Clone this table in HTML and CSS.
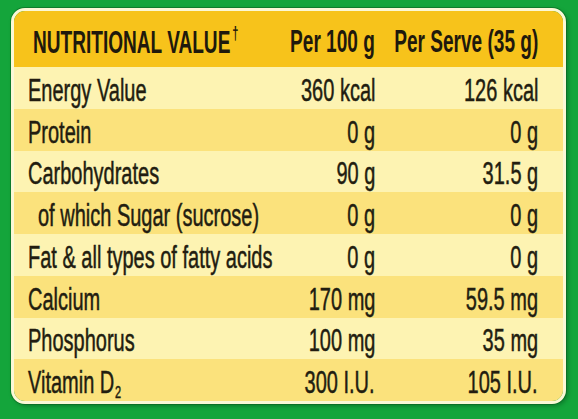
FILE: index.html
```html
<!DOCTYPE html>
<html>
<head>
    <title>Nutritional Value</title>
    <link rel="stylesheet" href="styles.css">
</head>
<body>
    <div class="label">
        <div class="row head">
            <div class="cell name"><span class="txt">NUTRITIONAL VALUE<sup class="dagger">†</sup></span></div>
            <div class="cell num"><span class="txt">Per 100 g</span></div>
            <div class="cell num last"><span class="txt">Per Serve (35 g)</span></div>
        </div>
        <div class="row light">
            <div class="cell name"><span class="txt">Energy Value</span></div>
            <div class="cell num"><span class="txt">360 kcal</span></div>
            <div class="cell num last"><span class="txt">126 kcal</span></div>
        </div>
        <div class="row dark">
            <div class="cell name"><span class="txt">Protein</span></div>
            <div class="cell num"><span class="txt">0 g</span></div>
            <div class="cell num last"><span class="txt">0 g</span></div>
        </div>
        <div class="row light">
            <div class="cell name"><span class="txt">Carbohydrates</span></div>
            <div class="cell num"><span class="txt">90 g</span></div>
            <div class="cell num last"><span class="txt">31.5 g</span></div>
        </div>
        <div class="row dark">
            <div class="cell name sub"><span class="txt">of which Sugar (sucrose)</span></div>
            <div class="cell num"><span class="txt">0 g</span></div>
            <div class="cell num last"><span class="txt">0 g</span></div>
        </div>
        <div class="row light">
            <div class="cell name"><span class="txt">Fat &amp; all types of fatty acids</span></div>
            <div class="cell num"><span class="txt">0 g</span></div>
            <div class="cell num last"><span class="txt">0 g</span></div>
        </div>
        <div class="row dark">
            <div class="cell name"><span class="txt">Calcium</span></div>
            <div class="cell num"><span class="txt">170 mg</span></div>
            <div class="cell num last"><span class="txt">59.5 mg</span></div>
        </div>
        <div class="row light">
            <div class="cell name"><span class="txt">Phosphorus</span></div>
            <div class="cell num"><span class="txt">100 mg</span></div>
            <div class="cell num last"><span class="txt">35 mg</span></div>
        </div>
        <div class="row dark">
            <div class="cell name"><span class="txt">Vitamin D<sub class="low">2</sub></span></div>
            <div class="cell num"><span class="txt">300 I.U.</span></div>
            <div class="cell num last"><span class="txt">105 I.U.</span></div>
        </div>
    </div>
</body>
</html>
```

FILE: styles.css
```css
* {
    margin: 0;
    padding: 0;
    box-sizing: border-box;
}

body {
    width: 578px;
    height: 419px;
    background: #14a53b;
    padding: 8px 12px 15px 11px;
    font-family: 'Liberation Sans', Arial, sans-serif;
    color: #221d10;
    overflow: hidden;
}

.label {
    width: 555px;
    height: 396px;
    border: 3px solid #fbf8d6;
    border-radius: 14px;
    overflow: hidden;
    display: grid;
    grid-template-rows: 56px repeat(8, minmax(0, 1fr));
    box-shadow: 0 0 0 1px rgba(10, 90, 30, 0.5), 2px 2px 4px rgba(0, 60, 20, 0.4);
}

.row {
    display: grid;
    grid-template-columns: minmax(0, 1fr) 110px 188px;
    align-items: center;
    white-space: nowrap;
    line-height: 1.1;
    padding-top: 6px;
}

.head {
    background: #f7c31b;
    font-weight: bold;
    font-size: 31px;
    color: #1f190c;
    padding-top: 7px;
}

.light {
    background: #fdf3b2;
    font-size: 31px;
}

.dark {
    background: #fbe27c;
    font-size: 31px;
}

.light .txt,
.dark .txt {
    -webkit-text-stroke: 0.5px #221d10;
}

.cell {
    min-width: 0;
}

.cell.name {
    padding-left: 14px;
}

.head .cell.name {
    padding-left: 19px;
}

.cell.name.sub {
    padding-left: 24px;
}

.cell.num {
    display: flex;
    justify-content: flex-end;
}

.cell.num.last {
    padding-right: 25px;
}

.txt {
    display: inline-block;
    transform: scaleX(0.645);
    transform-origin: left center;
}

.head .txt {
    transform: scaleX(0.615);
}

.num .txt {
    transform-origin: right center;
}

.dagger {
    font-size: 18px;
    vertical-align: 14px;
    margin-left: 3px;
}

.low {
    font-size: 17px;
    line-height: 0;
    vertical-align: -5px;
    margin-left: 1px;
}
```
